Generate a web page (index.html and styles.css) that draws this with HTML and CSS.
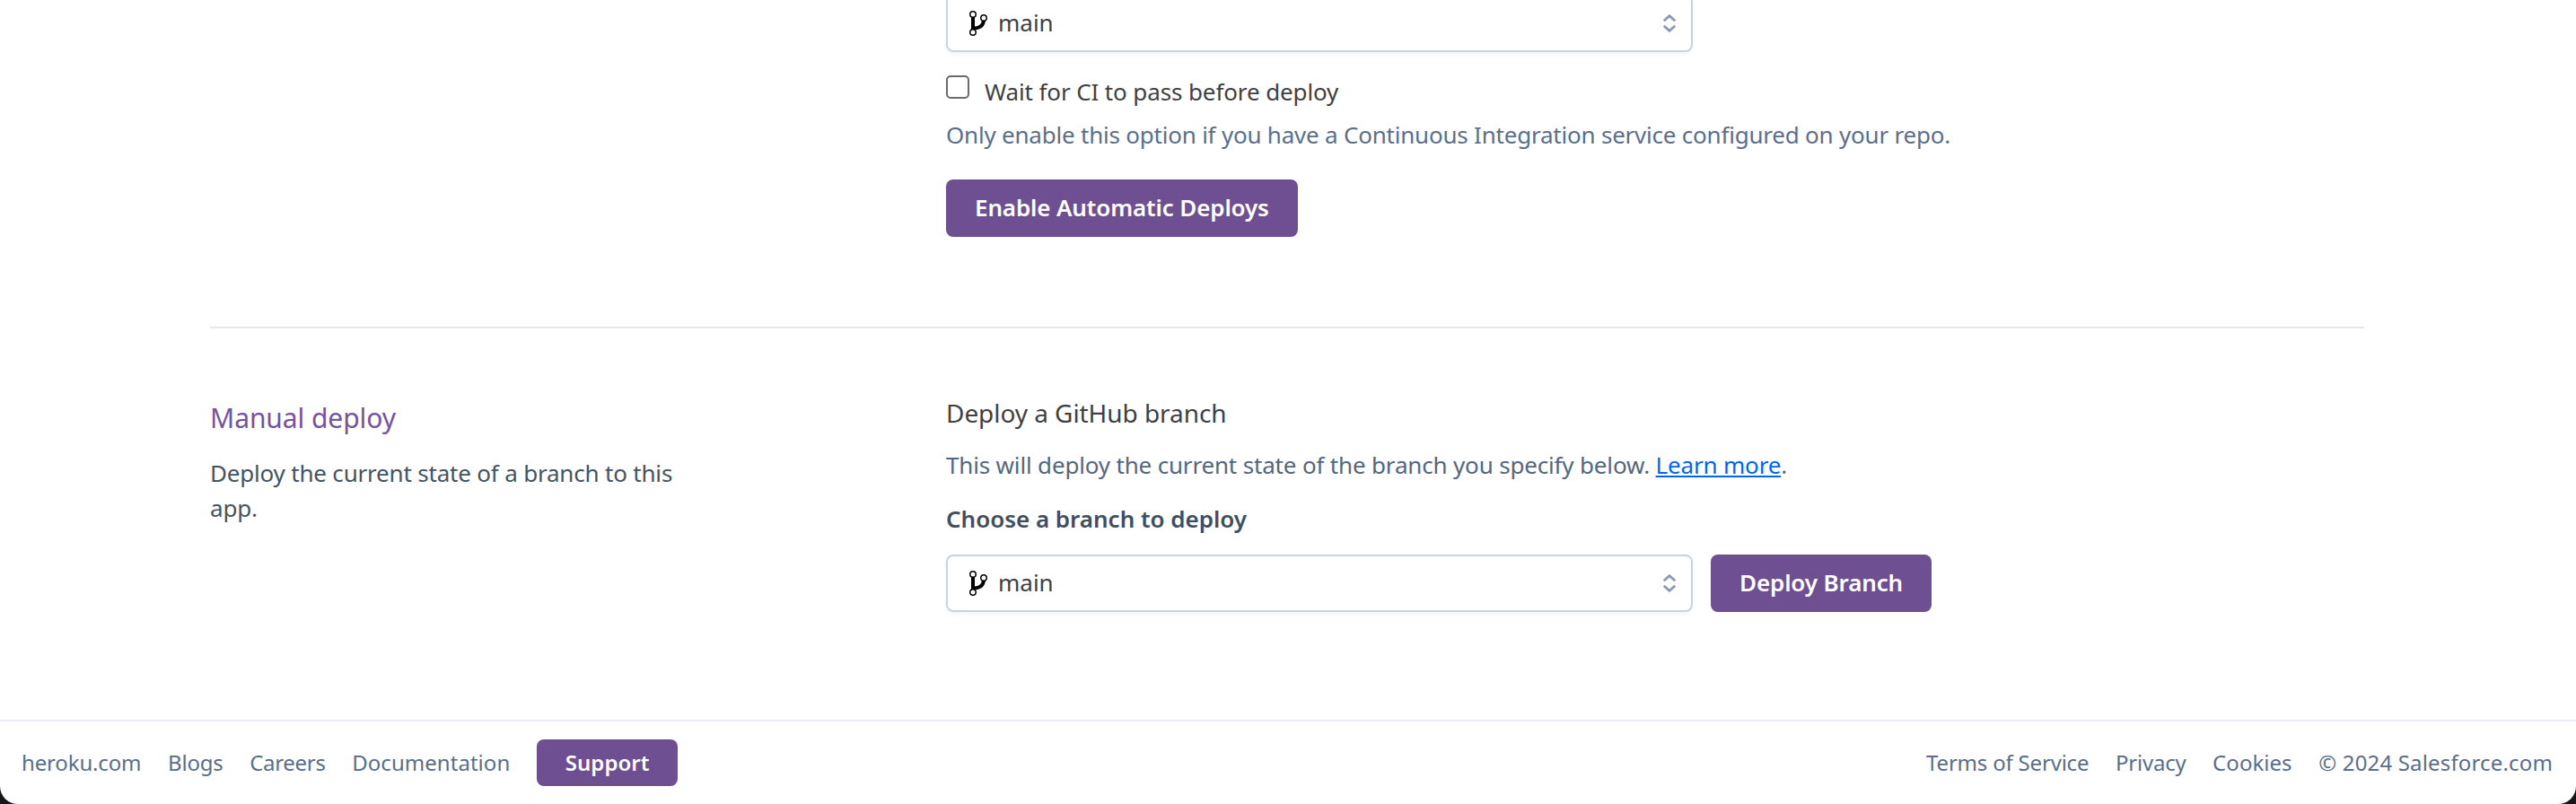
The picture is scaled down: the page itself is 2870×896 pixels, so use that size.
FILE: index.html
```
<!DOCTYPE html>
<html lang="en">
<head>
<meta charset="utf-8">
<title>Deploy</title>
<link rel="stylesheet" href="styles.css">
</head>
<body>
<div class="page">
  <main class="content">
    <section class="row row-auto">
      <div class="aside"></div>
      <div class="body">
        <div class="select">
          <svg class="branch" viewBox="0 0 20 28" width="20" height="28"><path d="M4 6v16M4 19.500c5 0 11.500-1 12-9" fill="none" stroke="#000" stroke-width="4"/><g fill="#fff" stroke="#000" stroke-width="1.500"><circle cx="4" cy="4" r="3.250"/><circle cx="16" cy="8" r="3.250"/><circle cx="4" cy="24" r="3.250"/></g></svg>
          <span class="value">main</span>
          <svg class="arrows" viewBox="0 0 16 20" width="16" height="20"><path d="M1.700 7.300 8 1.600l6.300 5.700M1.700 12.700l6.300 5.700 6.300-5.700" fill="none" stroke="#8b9bb3" stroke-width="2.800"/></svg>
        </div>
        <label class="check"><span class="box"></span><span class="check-text">Wait for CI to pass before deploy</span></label>
        <p class="help">Only enable this option if you have a Continuous Integration service configured on your repo.</p>
        <a class="btn">Enable Automatic Deploys</a>
      </div>
    </section>
    <section class="row row-manual">
      <div class="aside">
        <h2 class="title">Manual deploy</h2>
        <p class="desc">Deploy the current state of a branch to this app.</p>
      </div>
      <div class="body">
        <h3 class="subtitle">Deploy a GitHub branch</h3>
        <p class="intro">This will deploy the current state of the branch you specify below. <a class="link">Learn more</a>.</p>
        <div class="label">Choose a branch to deploy</div>
        <div class="controls">
          <div class="select">
            <svg class="branch" viewBox="0 0 20 28" width="20" height="28"><path d="M4 6v16M4 19.500c5 0 11.500-1 12-9" fill="none" stroke="#000" stroke-width="4"/><g fill="#fff" stroke="#000" stroke-width="1.500"><circle cx="4" cy="4" r="3.250"/><circle cx="16" cy="8" r="3.250"/><circle cx="4" cy="24" r="3.250"/></g></svg>
            <span class="value">main</span>
            <svg class="arrows" viewBox="0 0 16 20" width="16" height="20"><path d="M1.700 7.300 8 1.600l6.300 5.700M1.700 12.700l6.300 5.700 6.300-5.700" fill="none" stroke="#8b9bb3" stroke-width="2.800"/></svg>
          </div>
          <a class="btn">Deploy Branch</a>
        </div>
      </div>
    </section>
  </main>
  <footer class="footer">
    <nav class="links"><a class="snug">heroku.com</a><a class="tight">Blogs</a><a class="tighter">Careers</a><a class="even">Documentation</a><a class="btn btn-small">Support</a></nav>
    <nav class="links"><a class="tight">Terms of Service</a><a class="tight">Privacy</a><a class="even">Cookies</a><a class="loose">© 2024 Salesforce.com</a></nav>
  </footer>
</div>
</body>
</html>
```
FILE: styles.css
```
* { box-sizing: border-box; }
body { margin: 0; background: #17171b; font-family: "Noto Sans", sans-serif; font-size: 26px; color: #3f3f44; }
h2, h3, p { margin: 0; font-weight: 400; }
.page { height: 896px; display: flex; flex-direction: column; overflow: hidden; background: #fff; border-radius: 0 0 20px 20px; }
.content { flex: 1; padding: 0 236px 0 234px; }
.row { display: grid; grid-template-columns: 820px 1fr; }
.row-auto { height: 366px; border-bottom: 2px solid #e3e8f2; }
.row-auto .body { margin-top: -6px; }
.select { width: 832px; height: 64px; display: flex; align-items: center; padding: 0 16px 0 24px; border: 2px solid #c6d3e3; border-radius: 8px; background: #fff; box-shadow: 0 3px 5px rgba(0,0,0,.04); }
.branch { flex: none; }
.value { margin-left: 12px; padding-bottom: 2px; }
.arrows { margin-left: auto; flex: none; }
.check { display: flex; margin-top: 26px; height: 47px; gap: 17px; line-height: 37px; letter-spacing: -.12px; }
.box { width: 26px; height: 26px; border: 2px solid #6b6b6b; border-radius: 5px; }
.help { line-height: 38px; color: #5b6f8b; letter-spacing: -.215px; }
.btn { display: inline-flex; align-items: center; justify-content: center; height: 64px; padding: 0 32px 2px; border-radius: 8px; background: #6e4f91; color: #fff; font-weight: 600; letter-spacing: -.13px; }
.row-auto .btn { margin-top: 31px; }
.title { font-size: 30px; line-height: 40px; margin-top: 80px; color: #7454a0; letter-spacing: -.08px; }
.desc { max-width: 540px; line-height: 39px; margin-top: 22px; color: #445463; letter-spacing: -.19px; }
.subtitle { font-size: 28px; line-height: 40px; margin-top: 74px; letter-spacing: -.06px; }
.intro { line-height: 38px; margin-top: 19px; color: #53677e; letter-spacing: -.17px; }
.link { color: #0068e8; text-decoration: underline; text-decoration-thickness: 2px; text-underline-offset: 2px; }
.label { font-weight: 600; line-height: 38px; margin-top: 22px; color: #3f4f60; letter-spacing: -.02px; }
.controls { display: flex; gap: 20px; margin-top: 21px; }
.footer { height: 94px; border-top: 2px solid #e9eef4; display: flex; justify-content: space-between; align-items: center; padding: 0 26px 0 24px; font-size: 24px; color: #5a6e8a; }
.links { display: flex; align-items: center; gap: 29.6px; }
.links a { padding-bottom: 2px; }
.links .btn-small { height: 52px; padding: 0 32px 2px; letter-spacing: 0; }
.snug { letter-spacing: -.15px; }
.tight { letter-spacing: -.2px; }
.tighter { letter-spacing: -.3px; }
.even { letter-spacing: .04px; }
.loose { letter-spacing: .16px; }
```
